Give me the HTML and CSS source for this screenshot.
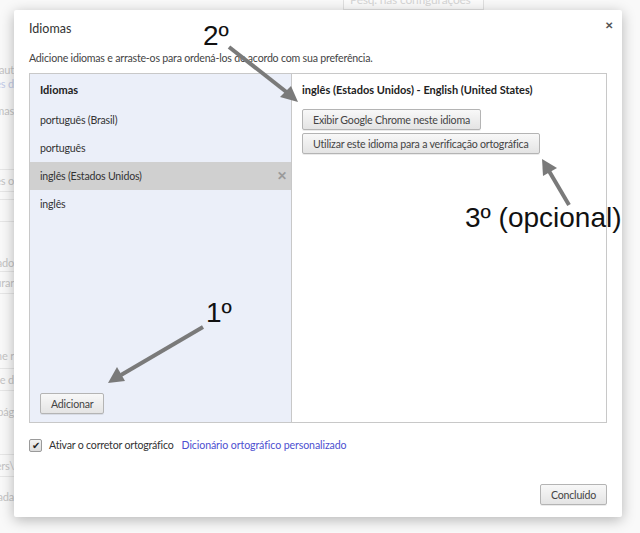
FILE: index.html
```html
<!DOCTYPE html>
<html lang="pt-BR">

<head>
    <meta charset="UTF-8">
    <title>Idiomas</title>
    <link rel="stylesheet" href="styles.css">
</head>

<body>
    <div class="page">
        <div class="search">Pesq. nas configurações</div>
        <div class="bg-lines">
            <div class="bg-text">Preencher aut</div>
            <div class="bg-text bg-link">Configurações d</div>
            <div class="bg-text m13">Idiomas</div>
            <div class="bg-field m51">Português o</div>
            <div class="bg-field m7"></div>
            <div class="bg-text m34">Localizado</div>
            <div class="bg-field m1">Aprocurar</div>
            <div class="bg-text m55">Google Chrome r</div>
            <div class="bg-field m5">Abrir uma página de d</div>
            <div class="bg-text m14">Abrir pág</div>
            <div class="bg-field m35">C:\Users\</div>
            <div class="bg-text m13">Salvar o arquivo em pasta baixada</div>
        </div>
    </div>

    <div class="dialog">
        <div class="dialog-title">Idiomas</div>
        <span class="close">&#x2715;</span>
        <div class="dialog-sub">Adicione idiomas e arraste-os para ordená-los de acordo com sua preferência.</div>

        <div class="lang-box">
            <div class="lang-list">
                <div class="list-head">Idiomas</div>
                <div class="list-item">português (Brasil)</div>
                <div class="list-item">português</div>
                <div class="list-item selected">inglês (Estados Unidos)<span class="remove">&#x2715;</span></div>
                <div class="list-item">inglês</div>
                <button class="btn add-btn">Adicionar</button>
            </div>
            <div class="lang-detail">
                <div class="detail-head">inglês (Estados Unidos) - English (United States)</div>
                <button class="btn">Exibir Google Chrome neste idioma</button>
                <button class="btn">Utilizar este idioma para a verificação ortográfica</button>
            </div>
        </div>

        <div class="spell-row">
            <span class="check">&#x2714;</span>
            <span>Ativar o corretor ortográfico</span>
            <a href="#" class="link">Dicionário ortográfico personalizado</a>
        </div>

        <div class="dialog-foot">
            <button class="btn">Concluído</button>
        </div>
    </div>

    <svg class="notes" width="640" height="533" viewBox="0 0 640 533">
        <text x="203" y="45">2º</text>
        <line x1="229" y1="47" x2="289" y2="94" />
        <polygon points="298,102 280,97 291,86" />

        <text x="206" y="322">1º</text>
        <line x1="203" y1="327" x2="121" y2="375" />
        <polygon points="108,383 117,367 125,381" />

        <text x="465" y="227">3º (opcional)</text>
        <line x1="569" y1="205" x2="549" y2="171" />
        <polygon points="542,159 557,168 543,176" />
    </svg>
</body>

</html>
```

FILE: styles.css
```css
body {
    margin: 0;
    width: 640px;
    height: 533px;
    overflow: hidden;
    background: #f9f9f9;
    font-family: Lato, "Open Sans", sans-serif;
    font-size: 10.6px;
    letter-spacing: -0.2px;
    color: #333;
}

.page {
    height: 533px;
    color: #c4c4c4;
}

.search {
    margin-left: 343px;
    width: 133px;
    height: 9px;
    line-height: 0;
    padding: 0 0 0 6px;
    border: 1px solid #e0e0e0;
    border-top: none;
    background: #fbfbfb;
    font-size: 12px;
    overflow: hidden;
    color: #d6d6d6;
}

/* faded settings page behind the dialog, only its left edge shows */
.bg-lines {
    width: 14px;
    overflow: hidden;
    padding-top: 53px;
    font-size: 11px;
}

.bg-text,
.bg-field {
    display: flex;
    justify-content: flex-end;
    white-space: nowrap;
}

.bg-text {
    height: 14px;
    line-height: 14px;
}

.bg-link {
    color: #c3cbe8;
}

.bg-field {
    height: 21px;
    line-height: 21px;
    border-top: 1px solid #e6e6e6;
    border-bottom: 1px solid #e6e6e6;
}

.m1 { margin-top: 1px; }
.m5 { margin-top: 5px; }
.m7 { margin-top: 7px; }
.m13 { margin-top: 13px; }
.m14 { margin-top: 14px; }
.m34 { margin-top: 34px; }
.m35 { margin-top: 35px; }
.m51 { margin-top: 51px; }
.m55 { margin-top: 55px; }

.dialog {
    position: absolute;
    left: 14px;
    top: 10px;
    width: 608px;
    height: 507px;
    box-sizing: border-box;
    padding: 0 15px;
    background: #fff;
    border-radius: 2px;
    box-shadow: 0 3px 14px rgba(0, 0, 0, 0.28);
    display: flex;
    flex-direction: column;
}

.dialog-title {
    padding-top: 12px;
    line-height: 14px;
    font-size: 12.5px;
    letter-spacing: 0;
    color: #333;
}

.close {
    position: absolute;
    right: 9px;
    top: 9px;
    font-size: 10px;
    font-weight: bold;
    color: #555;
}

.dialog-sub {
    margin-top: 15px;
    line-height: 14px;
    color: #444;
}

.lang-box {
    margin-top: 8px;
    height: 350px;
    box-sizing: border-box;
    border: 1px solid #c8c8c8;
    display: flex;
}

.lang-list {
    width: 262px;
    box-sizing: border-box;
    border-right: 1px solid #c8c8c8;
    background: #ebeff9;
    display: flex;
    flex-direction: column;
}

.list-head {
    height: 32px;
    line-height: 32px;
    padding-left: 10px;
    font-size: 11px;
    letter-spacing: 0;
    font-weight: bold;
    color: #222;
}

.list-item {
    height: 28px;
    line-height: 28px;
    padding-left: 10px;
    display: flex;
    color: #333;
}

.list-item.selected {
    background: #d0d0d0;
}

.remove {
    margin-left: auto;
    margin-right: 4px;
    font-size: 12px;
    font-weight: bold;
    color: #9a9a9a;
}

.add-btn {
    margin: auto 0 8px 10px;
    align-self: flex-start;
}

.lang-detail {
    flex: 1;
    padding-left: 10px;
    display: flex;
    flex-direction: column;
    align-items: flex-start;
    gap: 3px;
}

.detail-head {
    height: 32px;
    line-height: 32px;
    font-size: 11px;
    letter-spacing: 0;
    font-weight: bold;
    color: #222;
}

.btn {
    height: 21px;
    padding: 0 10px;
    font-family: inherit;
    font-size: inherit;
    letter-spacing: inherit;
    color: #444;
    border: 1px solid #b4b4b4;
    border-radius: 2px;
    background: linear-gradient(#f8f8f8, #e4e4e4);
    box-shadow: 0 1px 0 rgba(0, 0, 0, 0.08);
}

.spell-row {
    margin-top: 15px;
    display: flex;
    align-items: center;
    gap: 6px;
    line-height: 14px;
    color: #333;
}

.check {
    width: 11px;
    height: 11px;
    border: 1px solid #9a9a9a;
    border-radius: 2px;
    background: linear-gradient(#f2f2f2, #dcdcdc);
    font-size: 10px;
    line-height: 11px;
    text-align: center;
    color: #222;
    margin-right: 1px;
}

.link {
    margin-left: 2px;
    letter-spacing: -0.1px;
    color: #4d4fd0;
    text-decoration: none;
}

.dialog-foot {
    margin-top: auto;
    margin-bottom: 12px;
    display: flex;
    justify-content: flex-end;
}

.notes {
    position: absolute;
    left: 0;
    top: 0;
}

.notes text {
    font-family: "Liberation Sans", Arial, sans-serif;
    font-size: 28px;
    letter-spacing: 0;
    fill: #111;
}

.notes line {
    stroke: #7a7a7a;
    stroke-width: 4;
}

.notes polygon {
    fill: #7a7a7a;
}
```
